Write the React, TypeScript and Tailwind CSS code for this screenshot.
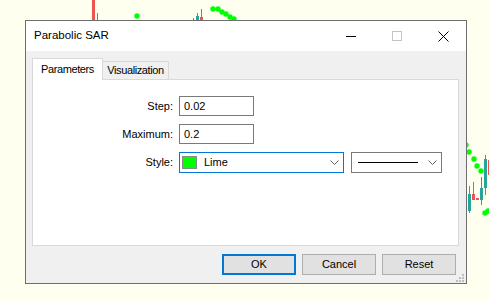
import React from "react";

function Chart() {
  const topDots: [number, number][] = [
    [137, 16],
    [213, 9],
    [218, 9],
    [222, 12],
    [226, 14],
    [230, 17],
    [234, 19],
  ];
  const rightDots: [number, number][] = [
    [466, 145],
    [469, 152],
    [474, 159],
    [477, 166],
    [481, 171],
    [485, 213],
    [488, 211],
  ];
  return (
    <svg className="absolute inset-0" width="489" height="301" viewBox="0 0 489 301">
      {/* top fragments */}
      <rect x="92" y="0" width="3" height="20" fill="#ef5350" />
      <rect x="97" y="13" width="1" height="7" fill="#26a69a" />
      <rect x="193" y="18" width="1" height="2" fill="#26a69a" />
      <rect x="197" y="13" width="1" height="3" fill="#26a69a" />
      <rect x="196" y="16" width="3" height="4" fill="#26a69a" />
      <rect x="201" y="9" width="1" height="8" fill="#ef5350" />
      <rect x="200" y="17" width="3" height="3" fill="#ef5350" />
      {/* right fragments */}
      <rect x="469" y="186" width="1" height="27" fill="#26a69a" />
      <rect x="468" y="194" width="3" height="17" fill="#26a69a" />
      <rect x="473" y="182" width="1" height="18" fill="#ef5350" />
      <rect x="472" y="194" width="3" height="6" fill="#ef5350" />
      <rect x="476" y="198" width="3" height="2" fill="#ef5350" />
      <rect x="481" y="177" width="1" height="28" fill="#26a69a" />
      <rect x="480" y="188" width="3" height="12" fill="#26a69a" />
      <rect x="485" y="155" width="1" height="40" fill="#26a69a" />
      <rect x="484" y="159" width="3" height="29" fill="#26a69a" />
      <rect x="488" y="160" width="1" height="15" fill="#ef5350" />
      {[...topDots, ...rightDots].map(([cx, cy], i) => (
        <circle key={i} cx={cx} cy={cy} r="2.7" fill="#00ff00" />
      ))}
    </svg>
  );
}

function Chevron() {
  return (
    <svg width="9" height="5" viewBox="0 0 9 5">
      <path d="M0.5 0.5 L4.5 4.5 L8.5 0.5" fill="none" stroke="#606060" strokeWidth="1" />
    </svg>
  );
}

export default function App() {
  return (
    <div className="relative w-[489px] h-[301px] overflow-hidden bg-[#fffff0] font-['Liberation_Sans',Arial,sans-serif] text-black">
      <Chart />
      <div className="relative ml-[25px] mt-[20px] w-[442px] h-[264px] border border-[#6e6e6e] bg-[#f0f0f0] flex flex-col">
        {/* title bar */}
        <div className="h-[30px] bg-white flex items-center">
          <span className="pl-[8px] text-[11.5px] leading-none">Parabolic SAR</span>
          <div className="ml-auto flex h-full">
            <div className="w-[46px] h-full flex items-center justify-center">
              <div className="w-[10px] h-px bg-black" />
            </div>
            <div className="w-[46px] h-full flex items-center justify-center">
              <div className="w-[10px] h-[10px] border border-[#c4c4c4]" />
            </div>
            <div className="w-[46px] h-full flex items-center justify-center">
              <svg width="11" height="11" viewBox="0 0 11 11">
                <path d="M0.5 0.5 L10.5 10.5 M10.5 0.5 L0.5 10.5" stroke="#000" strokeWidth="1" />
              </svg>
            </div>
          </div>
        </div>
        {/* body */}
        <div className="flex-1 flex flex-col pl-[6px] pr-[10px] pt-[7px] pb-[8px]">
          <div className="h-[21px] flex items-start text-[11px] tracking-[-0.4px]">
            <div className="relative z-10 w-[71px] h-[22px] bg-white border-t border-l border-r border-[#d9d9d9] flex items-center justify-center">
              Parameters
            </div>
            <div className="mt-[3px] w-[66px] h-[18px] border-t border-r border-[#d9d9d9] flex items-center justify-center">
              Visualization
            </div>
          </div>
          <div className="w-[427px] h-[167px] bg-white border border-[#d9d9d9] pt-[16px] flex flex-col gap-[8px] text-[11px]">
            <div className="flex items-center h-[20px]">
              <span className="w-[140px] text-right">Step:</span>
              <div className="ml-[6px] w-[75px] h-[20px] border border-[#7a7a7a] flex items-center pl-[4px]">0.02</div>
            </div>
            <div className="flex items-center h-[20px]">
              <span className="w-[140px] text-right">Maximum:</span>
              <div className="ml-[6px] w-[75px] h-[20px] border border-[#7a7a7a] flex items-center pl-[4px]">0.2</div>
            </div>
            <div className="flex items-center h-[21px]">
              <span className="w-[140px] text-right">Style:</span>
              <div className="ml-[6px] w-[165px] h-[21px] border border-[#0078d7] flex items-center pl-[2px] pr-[4px]">
                <div className="w-[15px] h-[13px] border border-[#8a8a8a] bg-[#00ff00]" />
                <span className="ml-[7px]">Lime</span>
                <div className="ml-auto flex items-center">
                  <Chevron />
                </div>
              </div>
              <div className="ml-[7px] w-[91px] h-[21px] border border-[#7a7a7a] flex items-center pl-[6px] pr-[4px]">
                <div className="w-[60px] h-px bg-black" />
                <div className="ml-auto flex items-center">
                  <Chevron />
                </div>
              </div>
            </div>
          </div>
          <div className="mt-[8px] flex justify-end gap-[6px] text-[11px]">
            <button className="w-[74px] h-[21px] bg-[#e1e1e1] border-2 border-[#0078d7] flex items-center justify-center">OK</button>
            <button className="w-[74px] h-[21px] bg-[#e1e1e1] border border-[#adadad] flex items-center justify-center">Cancel</button>
            <button className="w-[74px] h-[21px] bg-[#e1e1e1] border border-[#adadad] flex items-center justify-center">Reset</button>
          </div>
        </div>
        <svg className="absolute right-[2px] bottom-[1px]" width="8" height="8" viewBox="0 0 8 8">
          <rect x="6" y="0" width="2" height="2" fill="#bdbdbd" />
          <rect x="3" y="3" width="2" height="2" fill="#bdbdbd" />
          <rect x="6" y="3" width="2" height="2" fill="#bdbdbd" />
          <rect x="0" y="6" width="2" height="2" fill="#bdbdbd" />
          <rect x="3" y="6" width="2" height="2" fill="#bdbdbd" />
          <rect x="6" y="6" width="2" height="2" fill="#bdbdbd" />
        </svg>
      </div>
    </div>
  );
}
